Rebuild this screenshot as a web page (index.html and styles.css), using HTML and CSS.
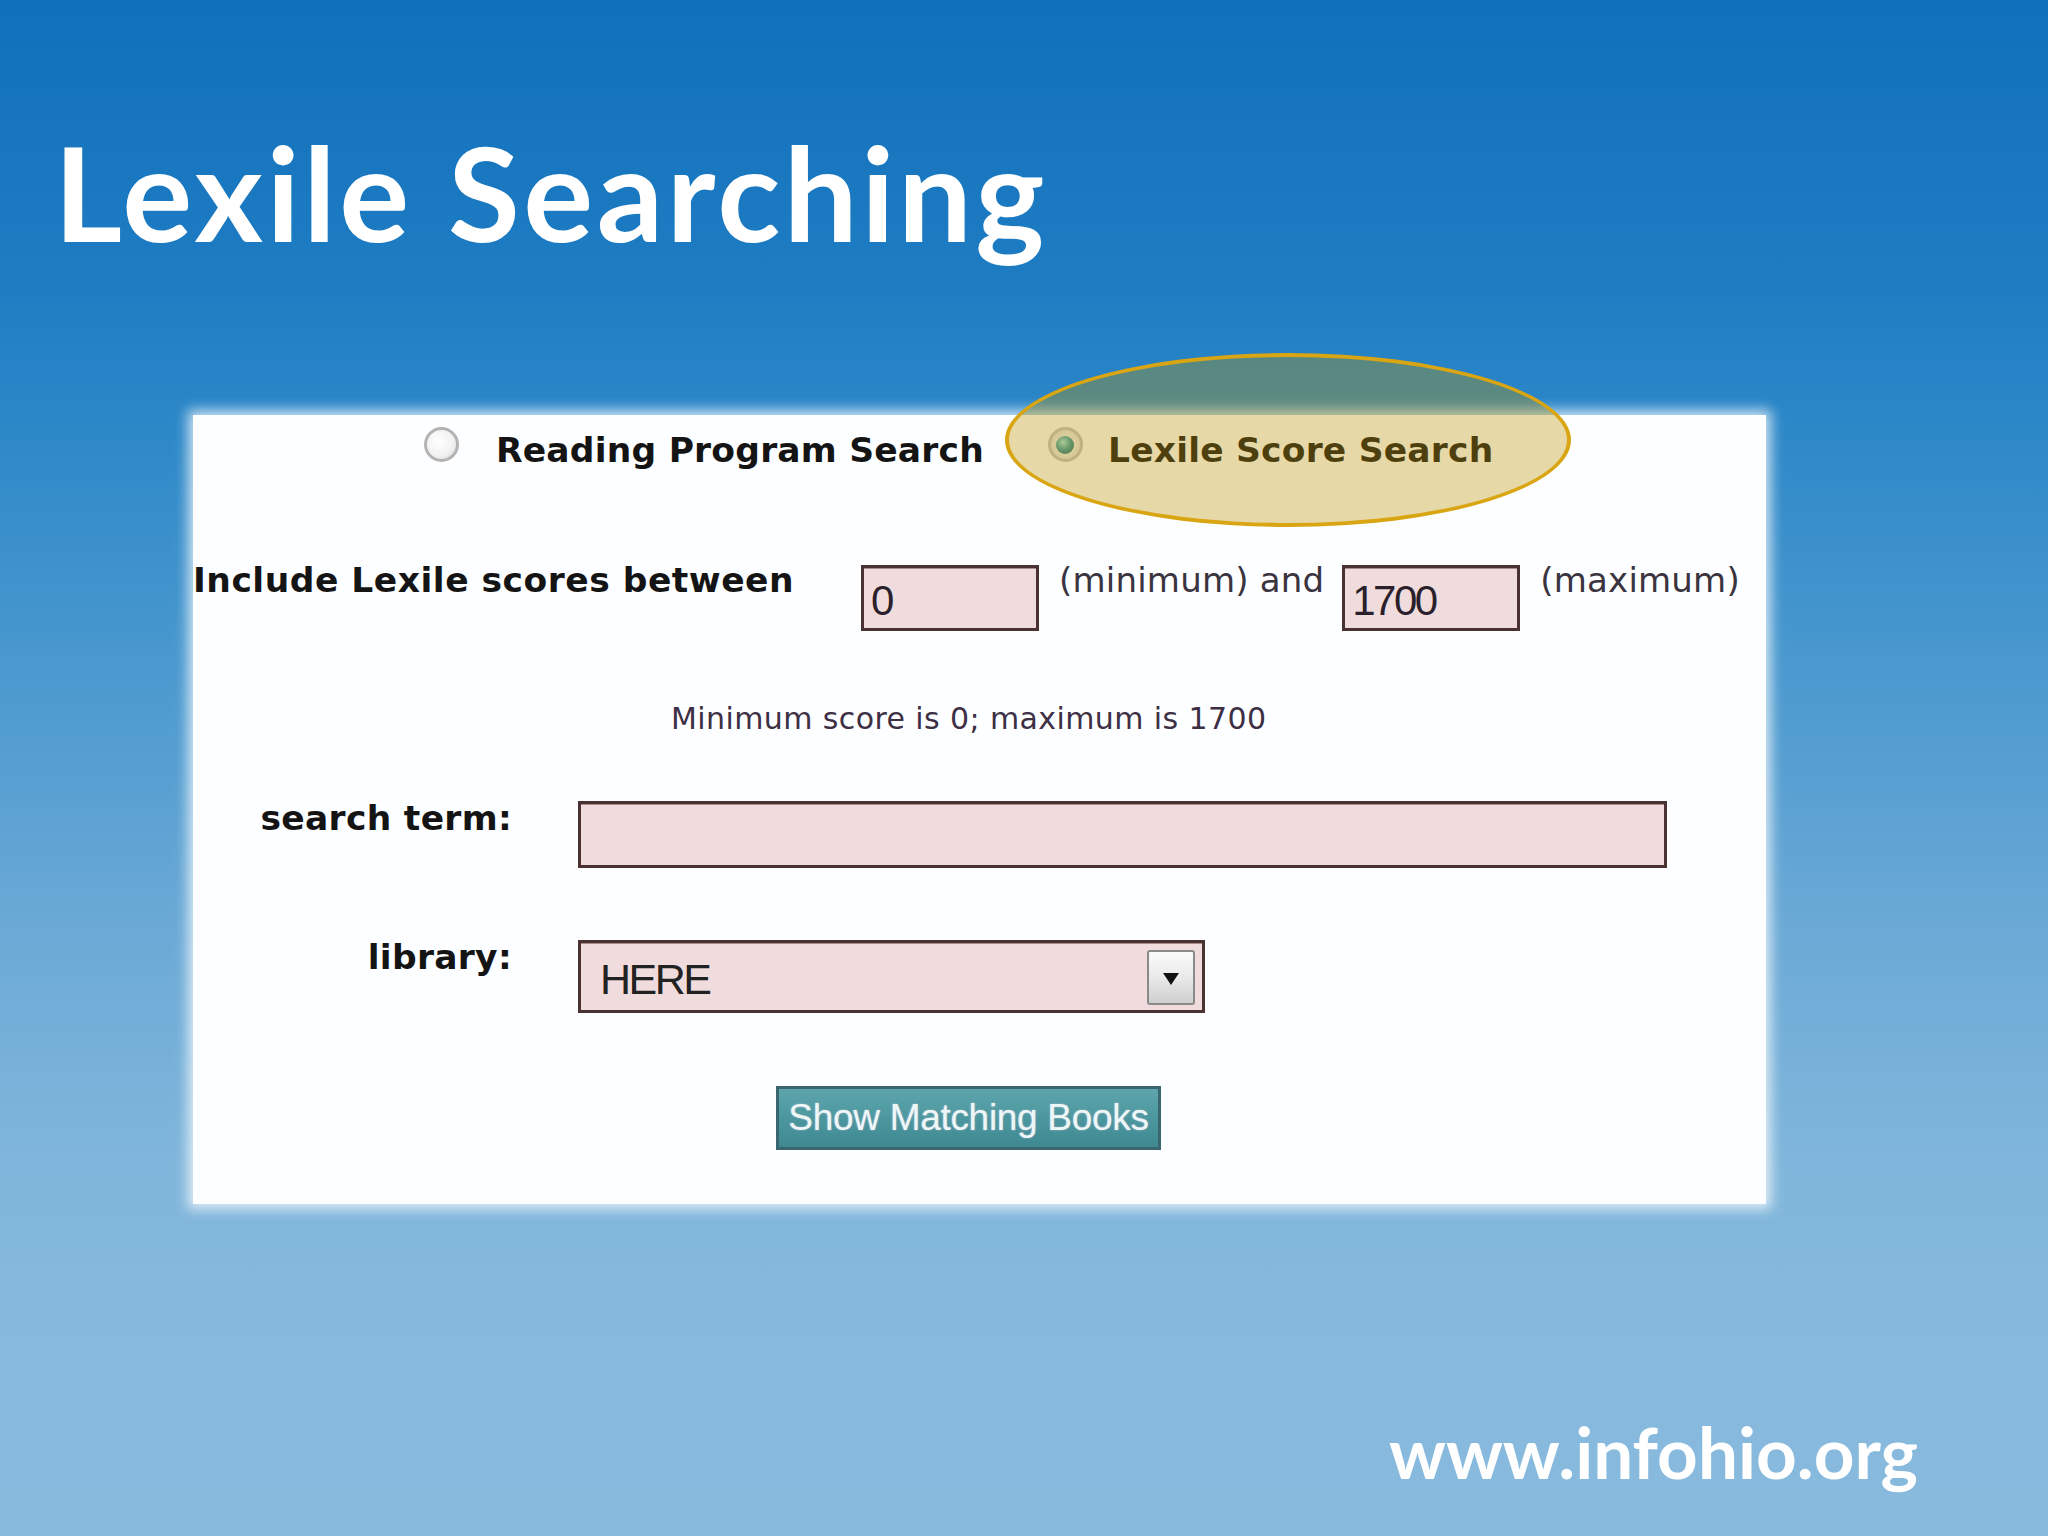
FILE: index.html
```html
<!DOCTYPE html>
<html lang="en">
<head>
<meta charset="utf-8">
<title>Lexile Searching</title>
<link rel="stylesheet" href="styles.css">
</head>
<body>
<div class="slide">
  <h1 class="title">Lexile Searching</h1>
  <div class="panel">
    <div class="highlight"></div>
    <div class="radio-row">
      <span class="radio"></span>
      <span class="radio-label">Reading Program Search</span>
      <span class="radio radio--on"><span class="radio-dot"></span></span>
      <span class="radio-label radio-label--second">Lexile Score Search</span>
    </div>
    <div class="range-row">
      <span class="range-label">Include Lexile scores between</span>
      <span class="field field--num">0</span>
      <span class="note">(minimum) and</span>
      <span class="field field--num">1700</span>
      <span class="note">(maximum)</span>
    </div>
    <div class="hint">Minimum score is 0; maximum is 1700</div>
    <div class="form-row">
      <span class="row-label">search term:</span>
      <span class="field field--wide"></span>
    </div>
    <div class="form-row form-row--library">
      <span class="row-label">library:</span>
      <span class="select">
        <span class="select-value">HERE</span>
        <span class="select-btn"><span class="select-arrow"></span></span>
      </span>
    </div>
    <div class="actions">
      <span class="btn">Show Matching Books</span>
    </div>
  </div>
  <div class="footer">www.infohio.org</div>
</div>
</body>
</html>
```
FILE: styles.css
```css
html, body {
  margin: 0;
  padding: 0;
}

body {
  width: 2048px;
  height: 1536px;
  overflow: hidden;
  background: linear-gradient(180deg, #1170bb 0%, #1d7cc2 18%, #2d88c8 28%, #4b99cf 44%, #6aa9d6 60%, #80b6db 76%, #86b9dd 88%, #87badd 100%);
  font-family: "DejaVu Sans", Verdana, sans-serif;
}

.slide {
  width: 2048px;
  height: 1536px;
}

.title {
  margin: 0;
  padding: 126px 0 0 54px;
  font-family: Lato, "Open Sans", sans-serif;
  font-weight: 700;
  font-size: 131px;
  line-height: 131px;
  letter-spacing: 3.5px;
  color: #ffffff;
}

.panel {
  position: relative;
  margin: 158px 0 0 193px;
  width: 1573px;
  height: 789px;
  background: #fdfeff;
  box-shadow: 0 0 12px 5px rgba(255, 255, 255, 0.75);
}

.highlight {
  position: absolute;
  left: 812px;
  top: -62px;
  width: 566px;
  height: 174px;
  box-sizing: border-box;
  border: 4px solid #d9a512;
  border-radius: 50%;
  background: rgba(185, 145, 3, 0.35);
  z-index: 2;
}

.radio-row {
  display: flex;
  align-items: flex-start;
  padding: 15px 0 0 231px;
  height: 40px;
}

.radio {
  box-sizing: border-box;
  width: 35px;
  height: 35px;
  margin-top: -3px;
  border-radius: 50%;
  border: 3px solid #b3b3b3;
  background: radial-gradient(circle at 40% 40%, #ffffff 0%, #f2f2f2 55%, #d6d6d6 100%);
  display: flex;
  align-items: center;
  justify-content: center;
}

.radio--on {
  margin-left: 64px;
  border-color: #c4c4c4;
  background: radial-gradient(circle, #f3f3f3 0%, #e9e9e9 60%, #cfcfcf 100%);
}

.radio-dot {
  width: 18px;
  height: 18px;
  border-radius: 50%;
  background: radial-gradient(circle at 40% 35%, #a6e6e6 0%, #3597a0 50%, #1c5f66 100%);
}

.radio-label {
  margin-left: 37px;
  font-weight: 700;
  font-size: 34.5px;
  line-height: 40px;
  letter-spacing: 0.2px;
  color: #141414;
}

.radio-label--second {
  margin-left: 25px;
}

.range-row {
  display: flex;
  align-items: flex-start;
  margin-top: 90px;
  height: 71px;
}

.range-label {
  width: 668px;
  flex: none;
  font-weight: 700;
  font-size: 34.5px;
  line-height: 40px;
  letter-spacing: 0.5px;
  color: #141414;
}

.field {
  box-sizing: border-box;
  display: block;
  flex: none;
  background: #f0dcdc;
  border: 3px solid #4a3232;
  box-shadow: inset 0 1px 0 #a88c8c;
}

.field--num {
  margin-top: 5px;
  width: 178px;
  height: 66px;
  padding: 6px 0 0 7px;
  font-family: "Liberation Sans", Arial, sans-serif;
  font-size: 42px;
  line-height: 54px;
  letter-spacing: -2.5px;
  color: #2a1f2a;
  overflow: hidden;
}

.note {
  margin-left: 20px;
  margin-right: 18px;
  font-size: 34px;
  line-height: 40px;
  letter-spacing: 0.2px;
  color: #3a3440;
}

.hint {
  margin-top: 71px;
  padding-left: 478px;
  font-size: 30px;
  line-height: 34px;
  letter-spacing: 0.4px;
  color: #3d3045;
}

.form-row {
  display: flex;
  align-items: flex-start;
  margin-top: 65px;
}

.form-row--library {
  margin-top: 72px;
}

.row-label {
  width: 319px;
  flex: none;
  text-align: right;
  font-weight: 700;
  font-size: 34.5px;
  line-height: 34px;
  letter-spacing: 0.3px;
  color: #141414;
}

.field--wide {
  margin-left: 66px;
  width: 1089px;
  height: 67px;
}

.select {
  box-sizing: border-box;
  margin-left: 66px;
  width: 627px;
  height: 73px;
  display: flex;
  align-items: flex-start;
  justify-content: space-between;
  background: #f0dcdc;
  border: 3px solid #4a3232;
  box-shadow: inset 0 1px 0 #a88c8c;
}

.select-value {
  padding: 10px 0 0 19px;
  font-family: "Liberation Sans", Arial, sans-serif;
  font-size: 43px;
  line-height: 52px;
  letter-spacing: -2.5px;
  color: #222222;
}

.select-btn {
  box-sizing: border-box;
  margin: 7px 7px 0 0;
  width: 48px;
  height: 55px;
  border: 2px solid #8a8a8a;
  border-radius: 3px;
  background: linear-gradient(180deg, #fbfbfb 0%, #e9e9e9 50%, #cfcfcf 100%);
  display: flex;
  align-items: center;
  justify-content: center;
}

.select-arrow {
  width: 0;
  height: 0;
  border-left: 8px solid transparent;
  border-right: 8px solid transparent;
  border-top: 12px solid #111111;
  margin-top: 3px;
}

.actions {
  margin-top: 73px;
  padding-left: 583px;
}

.btn {
  box-sizing: border-box;
  display: flex;
  align-items: center;
  justify-content: center;
  width: 385px;
  height: 64px;
  border: 3px solid #3a6670;
  background: linear-gradient(180deg, #5da5ad 0%, #4c979f 50%, #3f8891 100%);
  font-family: "Liberation Sans", Arial, sans-serif;
  font-size: 37px;
  line-height: 40px;
  letter-spacing: -0.3px;
  color: #eef7f8;
  text-shadow: 0 0 2px rgba(255, 220, 240, 0.6);
}

.footer {
  margin-top: 211px;
  padding-right: 130px;
  text-align: right;
  font-family: Lato, "Open Sans", sans-serif;
  font-weight: 700;
  font-size: 71px;
  line-height: 73px;
  color: #ffffff;
}
```
